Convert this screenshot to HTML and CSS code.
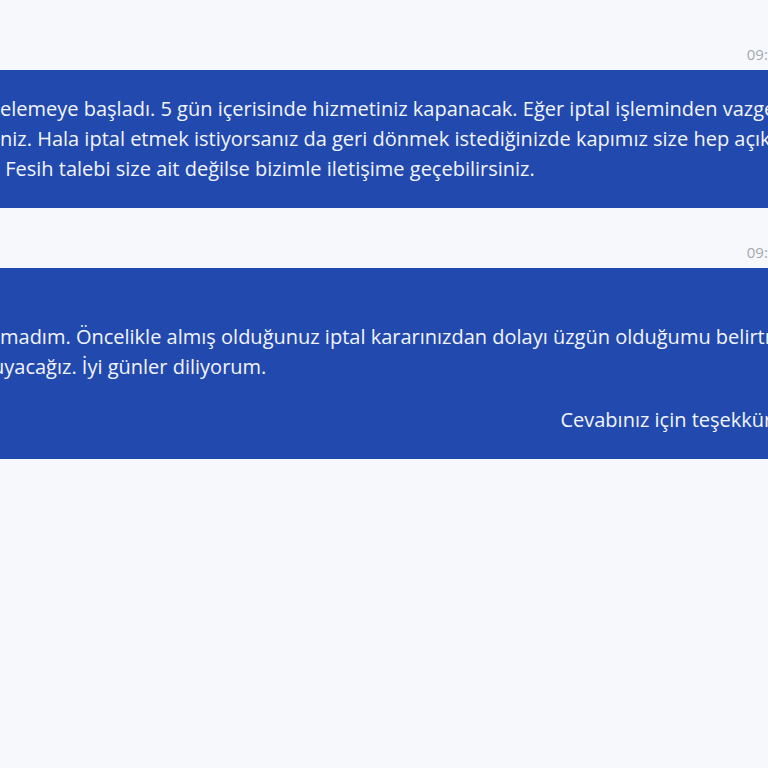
FILE: index.html
```html
<!DOCTYPE html>
<html lang="tr">
<head>
    <meta charset="UTF-8">
    <meta name="viewport" content="width=device-width, initial-scale=1.0">
    <title>Destek Talebi - Mesajlar</title>
    <link rel="stylesheet" href="styles.css">
</head>
<body>
    <main class="thread">
        <div class="message">
            <div class="message-time">09:41</div>
            <div class="bubble">
                <p>
                    <span class="line">elemeye başladı. 5 gün içerisinde hizmetiniz kapanacak. Eğer iptal işleminden vazgeçerseniz</span>
                    <span class="line">niz. Hala iptal etmek istiyorsanız da geri dönmek istediğinizde kapımız size hep açık olacaktır.</span>
                    <span class="line"> Fesih talebi size ait değilse bizimle iletişime geçebilirsiniz.</span>
                </p>
            </div>
        </div>
        <div class="message">
            <div class="message-time">09:52</div>
            <div class="bubble">
                <p>
                    <span class="line"> </span>
                    <span class="line">madım. Öncelikle almış olduğunuz iptal kararınızdan dolayı üzgün olduğumu belirtmek isterim.</span>
                    <span class="line cut">uyacağız. İyi günler diliyorum.</span>
                </p>
                <p class="sign">Cevabınız için teşekkür ederiz.</p>
            </div>
        </div>
    </main>
</body>
</html>
```

FILE: styles.css
```css
html {
    background-color: #f7f8fc;
}
body {
    margin: 0;
    padding: 0;
    overflow: hidden;
    font-family: "Open Sans", "Noto Sans", Arial, sans-serif;
}
.thread {
    width: 880px;
    margin-left: -20px;
    padding-top: 45px;
}
.message {
    margin-bottom: 35px;
}
.message-time {
    text-align: right;
    font-size: 15px;
    line-height: 18px;
    color: #a3a7ae;
    padding-right: 75px;
    margin-bottom: 7px;
}
.bubble {
    background-color: #2249ad;
    color: #f2f5ff;
    padding: 24px 20px;
    font-size: 20px;
    line-height: 30px;
    overflow: hidden;
}
.bubble p {
    margin: 0;
}
.line {
    display: block;
    white-space: pre;
}
.line.cut {
    margin-left: -8px;
}
.sign {
    text-align: right;
    margin-top: 23px !important;
}
```
